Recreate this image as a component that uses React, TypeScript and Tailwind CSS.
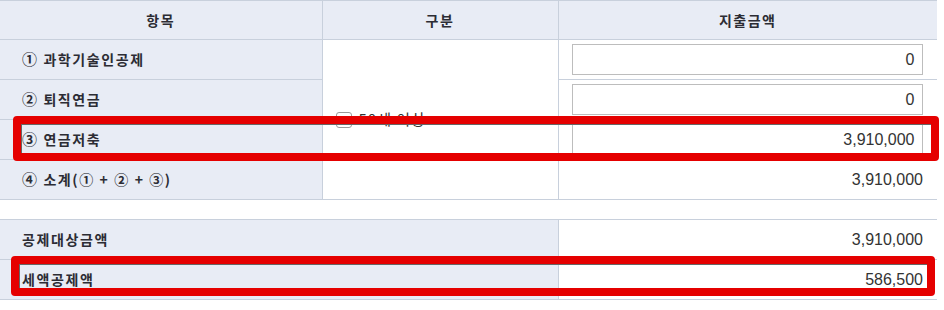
const labelFont = { fontFamily: '"Noto Sans CJK KR", "Noto Sans", sans-serif' };

function AmountInput({ value }: { value: string }) {
    return (
        <input
            readOnly
            value={value}
            className="block w-[351px] h-[31px] border border-[#bdbdbd] bg-white px-[7px] text-right text-[16px] text-[#333] font-['Liberation_Sans',sans-serif] outline-none"
        />
    );
}

export default function App() {
    const th = "h-[39px] border-b border-[#c8d0dc] bg-[#e8ecf5] text-center text-[14px] font-bold text-[#2c2c34] tracking-[1.5px]";
    const label = "h-[40px] border-b border-[#c8d0dc] bg-[#e8ecf5] pl-[22px] text-left text-[14px] font-bold text-[#2c2c34] tracking-[1.6px]";
    const amount = "h-[40px] border-b border-[#c8d0dc] bg-white pr-[14px] text-right text-[16px] text-[#333] font-['Liberation_Sans',sans-serif]";

    return (
        <div className="relative w-[944px] h-[310px] bg-white" style={labelFont}>
            {/* 지출금액 table */}
            <table className="w-[937px] border-collapse table-fixed">
                <colgroup>
                    <col className="w-[322px]" />
                    <col className="w-[236px]" />
                    <col className="w-[379px]" />
                </colgroup>
                <thead>
                    <tr className="border-t border-[#c8d0dc]">
                        <th className={th + " border-r"}>항목</th>
                        <th className={th + " border-r"}>구분</th>
                        <th className={th}>지출금액</th>
                    </tr>
                </thead>
                <tbody>
                    <tr>
                        <td className={label + " border-r"}><span className="text-[15px]">①</span> 과학기술인공제</td>
                        <td rowSpan={4} className="border-r border-b border-[#c8d0dc] bg-white pl-[13px] align-middle">
                            <label className="flex items-center gap-[7px] text-[15px] tracking-[1px] text-[#333]">
                                <span className="inline-block w-[16px] h-[16px] rounded-[3px] border border-[#9a9a9a] bg-white" />
                                50세 이상
                            </label>
                        </td>
                        <td className="h-[40px] border-b border-[#c8d0dc] pl-[13px]">
                            <AmountInput value="0" />
                        </td>
                    </tr>
                    <tr>
                        <td className={label + " border-r"}><span className="text-[15px]">②</span> 퇴직연금</td>
                        <td className="h-[40px] border-b border-[#c8d0dc] pl-[13px]">
                            <AmountInput value="0" />
                        </td>
                    </tr>
                    <tr>
                        <td className={label + " border-r"}><span className="text-[15px]">③</span> 연금저축</td>
                        <td className="h-[40px] border-b border-[#c8d0dc] pl-[13px]">
                            <AmountInput value="3,910,000" />
                        </td>
                    </tr>
                    <tr>
                        <td className={label + " border-r"}><span className="text-[15px]">④</span> 소계(① + ② + ③)</td>
                        <td className={amount}>3,910,000</td>
                    </tr>
                </tbody>
            </table>

            {/* 세액공제 table */}
            <table className="mt-[19px] w-[937px] border-collapse table-fixed">
                <colgroup>
                    <col className="w-[558px]" />
                    <col className="w-[379px]" />
                </colgroup>
                <tbody>
                    <tr className="border-t border-[#c8d0dc]">
                        <td className={label + " border-r"}>공제대상금액</td>
                        <td className={amount}>3,910,000</td>
                    </tr>
                    <tr>
                        <td className={label + " border-r"}>세액공제액</td>
                        <td className={amount}>586,500</td>
                    </tr>
                </tbody>
            </table>

            {/* highlight annotations */}
            <div className="absolute left-[13px] top-[116px] w-[926px] h-[45px] rounded-[4px] border-[8px] border-[#e50000] shadow-[inset_1px_1px_0_#666]" />
            <div className="absolute left-[11px] top-[256px] w-[924px] h-[40px] rounded-[4px] border-[8px] border-[#e50000] shadow-[inset_1px_1px_0_#666]" />
        </div>
    );
}
